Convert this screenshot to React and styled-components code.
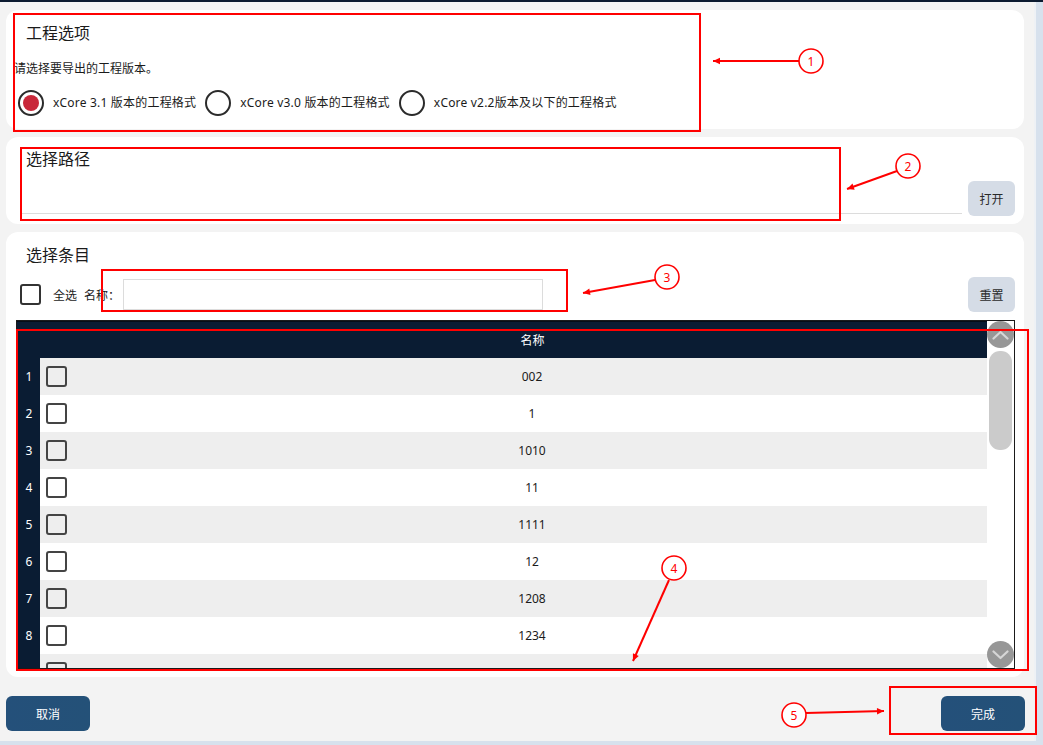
import React from "react";
import styled, { createGlobalStyle } from "styled-components";

const GlobalStyle = createGlobalStyle`
  html, body { margin: 0; padding: 0; background: #f3f3f3; }
  body {
    font-family: "Noto Sans", "Noto Sans CJK SC", sans-serif;
    color: #1f1f1f;
  }
  * { box-sizing: border-box; }
`;

const Frame = styled.div`
  position: relative;
  width: 1043px;
  height: 745px;
  overflow: hidden;
  display: flex;
  flex-direction: column;
  border-top: 2px solid #0b1a30;
  background: #d7e1ed;
`;

const Main = styled.div`
  flex: 1;
  display: flex;
  min-height: 0;
  padding-bottom: 4px;
`;

const Content = styled.main`
  width: 1036px;
  background: #f3f3f3;
  border-right: 2px solid #eef1f5;
  display: flex;
  flex-direction: column;
  gap: 8px;
  padding: 8px 10px 0 6px;
`;

const Card = styled.section`
  background: #ffffff;
  border-radius: 12px;
  height: ${(p) => p.$h}px;
  display: flex;
  flex-direction: column;
  padding: ${(p) => p.$pad};
`;

const Title = styled.h2`
  margin: 0;
  font-family: "Noto Sans CJK SC", sans-serif;
  font-weight: 400;
  font-size: 16px;
  line-height: 20px;
  color: #1b1b1b;
  padding-left: ${(p) => p.$indent}px;
`;

const Hint = styled.p`
  margin: 18px 0 0;
  font-family: "Noto Sans CJK SC", sans-serif;
  font-size: 12px;
  line-height: 16px;
  color: #1b1b1b;
`;

const RadioRow = styled.div`
  margin-top: 14px;
  padding-left: 4px;
  display: flex;
  align-items: center;
  gap: 9px;
`;

const RadioOption = styled.label`
  display: flex;
  align-items: center;
  gap: 9px;
  font-size: 12px;
  line-height: 16px;
  letter-spacing: 0.2px;
  font-family: "Noto Sans", "Noto Sans CJK SC", sans-serif;
  color: #1b1b1b;
`;

const RadioDot = styled.span`
  width: 26px;
  height: 26px;
  border-radius: 50%;
  border: 2px solid #2b2b2b;
  display: flex;
  align-items: center;
  justify-content: center;
  flex-shrink: 0;
  &::after {
    content: "";
    width: 16px;
    height: 16px;
    border-radius: 50%;
    background: ${(p) => (p.$on ? "#c9283a" : "transparent")};
  }
`;

const PathRow = styled.div`
  margin-top: auto;
  display: flex;
  align-items: flex-end;
  gap: 6px;
`;

const PathField = styled.div`
  flex: 1;
  height: 30px;
  border-bottom: 1px solid #dcdcdc;
  margin-bottom: 2px;
`;

const GrayButton = styled.button`
  width: 47px;
  height: 35px;
  border: none;
  border-radius: 6px;
  background: #d5dce6;
  color: #2a2a2a;
  font-family: "Noto Sans CJK SC", sans-serif;
  font-size: 12px;
  padding: 0;
`;

const FilterRow = styled.div`
  margin-top: 13px;
  display: flex;
  align-items: center;
  padding-left: 4px;
`;

const Box = styled.span`
  width: 21px;
  height: 21px;
  border: 2px solid ${(p) => p.$tone || "#444"};
  border-radius: 3px;
  flex-shrink: 0;
  display: inline-block;
`;

const SmallText = styled.span`
  font-family: "Noto Sans CJK SC", sans-serif;
  font-size: 12px;
  line-height: 16px;
  color: #1b1b1b;
  margin-left: ${(p) => p.$ml || 0}px;
`;

const NameInput = styled.input`
  width: 420px;
  height: 31px;
  border: 1px solid #dcdcdc;
  margin-left: 3px;
  outline: none;
  background: #fff;
`;

const Spacer = styled.div`
  flex: 1;
`;

const Table = styled.div`
  margin-top: 8px;
  height: 349px;
  border: 1px solid #1a1a1a;
  display: flex;
  background: #fff;
`;

const Grid = styled.div`
  flex: 1;
  display: flex;
  flex-direction: column;
  overflow: hidden;
  background: #0a1c33;
`;

const HeadRow = styled.div`
  height: 37px;
  flex-shrink: 0;
  display: grid;
  grid-template-columns: 24px 37px 1fr;
  align-items: center;
  color: #ffffff;
  font-family: "Noto Sans CJK SC", sans-serif;
  font-size: 12px;
  border-top: 1px solid #050d18;
`;

const HeadCell = styled.div`
  grid-column: 3;
  text-align: center;
  padding-bottom: 2px;
`;

const Row = styled.div`
  height: 37px;
  flex-shrink: 0;
  display: grid;
  grid-template-columns: 23px 37px 1fr;
  align-items: stretch;
`;

const IndexCell = styled.div`
  background: #0a1c33;
  color: #ffffff;
  font-size: 12px;
  font-family: "Noto Sans", sans-serif;
  display: flex;
  align-items: center;
  justify-content: center;
  padding-left: 1px;
`;

const CheckCell = styled.div`
  background: ${(p) => (p.$odd ? "#eeeeee" : "#ffffff")};
  display: flex;
  align-items: center;
  padding-left: 6px;
`;

const NameCell = styled.div`
  background: ${(p) => (p.$odd ? "#eeeeee" : "#ffffff")};
  display: flex;
  align-items: center;
  justify-content: center;
  font-size: 12px;
  font-family: "Noto Sans", sans-serif;
  color: #1b1b1b;
`;

const ScrollTrack = styled.div`
  width: 27px;
  background: #ffffff;
  display: flex;
  flex-direction: column;
  align-items: center;
`;

const ScrollKnob = styled.div`
  width: 27px;
  height: 27px;
  border-radius: 50%;
  background: #979797;
  display: flex;
  align-items: center;
  justify-content: center;
  flex-shrink: 0;
  margin-top: ${(p) => (p.$bottom ? "auto" : "0")};
`;

const Thumb = styled.div`
  width: 23px;
  height: 99px;
  margin-top: 3px;
  border-radius: 11px;
  background: #cbcbcb;
`;

const Footer = styled.footer`
  margin-top: 11px;
  display: flex;
  justify-content: space-between;
  margin-right: -1px;
`;

const NavyButton = styled.button`
  width: 84px;
  height: 35px;
  border: none;
  border-radius: 6px;
  background: linear-gradient(90deg, #24507a, #245178);
  color: #ffffff;
  font-family: "Noto Sans CJK SC", sans-serif;
  font-size: 12px;
  padding: 0;
`;

const Overlay = styled.svg`
  position: absolute;
  left: 0;
  top: -2px;
  pointer-events: none;
`;

const Chevron = ({ down }) => (
  <svg width="17" height="10" viewBox="0 0 17 10">
    <path
      d={down ? "M1.5 1.5 L8.5 8 L15.5 1.5" : "M1.5 8.5 L8.5 2 L15.5 8.5"}
      fill="none"
      stroke="#d6d6d6"
      strokeWidth="2.2"
      strokeLinecap="round"
      strokeLinejoin="round"
    />
  </svg>
);

const versions = [
  { label: "xCore 3.1 版本的工程格式", on: true },
  { label: "xCore v3.0 版本的工程格式", on: false },
  { label: "xCore v2.2版本及以下的工程格式", on: false },
];

const items = ["002", "1", "1010", "11", "1111", "12", "1208", "1234", "13"];

const callouts = [
  { box: [14, 14, 700, 131], num: "1", c: [811, 61], line: [799, 61, 713, 61] },
  { box: [21, 148, 840, 220], num: "2", c: [908, 166], line: [897, 171, 847, 189] },
  { box: [102, 270, 567, 311], num: "3", c: [667, 277], line: [655, 280, 583, 293] },
  { box: [17, 330, 1028, 670], num: "4", c: [674, 568], line: [669, 580, 633, 661] },
  { box: [890, 687, 1036, 734], num: "5", c: [794, 715], line: [806, 713, 884, 711] },
];

function arrowHead(x1, y1, x2, y2) {
  const a = Math.atan2(y2 - y1, x2 - x1);
  const len = 7;
  const w = 3.2;
  const bx = x2 - len * Math.cos(a);
  const by = y2 - len * Math.sin(a);
  const px = -Math.sin(a) * w;
  const py = Math.cos(a) * w;
  return `${x2},${y2} ${bx + px},${by + py} ${bx - px},${by - py}`;
}

function Callouts() {
  return (
    <Overlay width="1043" height="745" viewBox="0 0 1043 745">
      {callouts.map(({ box, num, c, line }) => (
        <g key={num}>
          <rect
            x={box[0]}
            y={box[1]}
            width={box[2] - box[0]}
            height={box[3] - box[1]}
            fill="none"
            stroke="#ff0000"
            strokeWidth="2"
          />
          <line x1={line[0]} y1={line[1]} x2={line[2]} y2={line[3]} stroke="#ff0000" strokeWidth="2" />
          <polygon points={arrowHead(...line)} fill="#ff0000" />
          <circle cx={c[0]} cy={c[1]} r="12" fill="#ffffff" stroke="#ff0000" strokeWidth="1.6" />
          <text
            x={c[0]}
            y={c[1] + 4.5}
            textAnchor="middle"
            fontSize="12"
            fontFamily="Noto Sans, sans-serif"
            fill="#ff0000"
          >
            {num}
          </text>
        </g>
      ))}
    </Overlay>
  );
}

export default function App() {
  return (
    <>
      <GlobalStyle />
      <Frame>
        <Main>
          <Content>
            <Card $h={119} $pad="12px 0 0 8px">
              <Title $indent={12}>工程选项</Title>
              <Hint>请选择要导出的工程版本。</Hint>
              <RadioRow>
                {versions.map((v) => (
                  <RadioOption key={v.label}>
                    <RadioDot $on={v.on} />
                    {v.label}
                  </RadioOption>
                ))}
              </RadioRow>
            </Card>

            <Card $h={87} $pad="11px 9px 8px 14px">
              <Title $indent={6}>选择路径</Title>
              <PathRow>
                <PathField />
                <GrayButton>打开</GrayButton>
              </PathRow>
            </Card>

            <Card $h={445} $pad="12px 9px 9px 10px">
              <Title $indent={10}>选择条目</Title>
              <FilterRow>
                <Box $tone="#333" />
                <SmallText $ml={12}>全选</SmallText>
                <SmallText $ml={7}>名称：</SmallText>
                <NameInput />
                <Spacer />
                <GrayButton>重置</GrayButton>
              </FilterRow>
              <Table>
                <Grid>
                  <HeadRow>
                    <HeadCell>名称</HeadCell>
                  </HeadRow>
                  {items.map((name, i) => (
                    <Row key={i}>
                      <IndexCell>{i < 8 ? i + 1 : ""}</IndexCell>
                      <CheckCell $odd={i % 2 === 0}>
                        <Box />
                      </CheckCell>
                      <NameCell $odd={i % 2 === 0}>{i < 8 ? name : ""}</NameCell>
                    </Row>
                  ))}
                </Grid>
                <ScrollTrack>
                  <ScrollKnob>
                    <Chevron />
                  </ScrollKnob>
                  <Thumb />
                  <ScrollKnob $bottom>
                    <Chevron down />
                  </ScrollKnob>
                </ScrollTrack>
              </Table>
            </Card>

            <Footer>
              <NavyButton>取消</NavyButton>
              <NavyButton>完成</NavyButton>
            </Footer>
          </Content>
        </Main>
        <Callouts />
      </Frame>
    </>
  );
}
